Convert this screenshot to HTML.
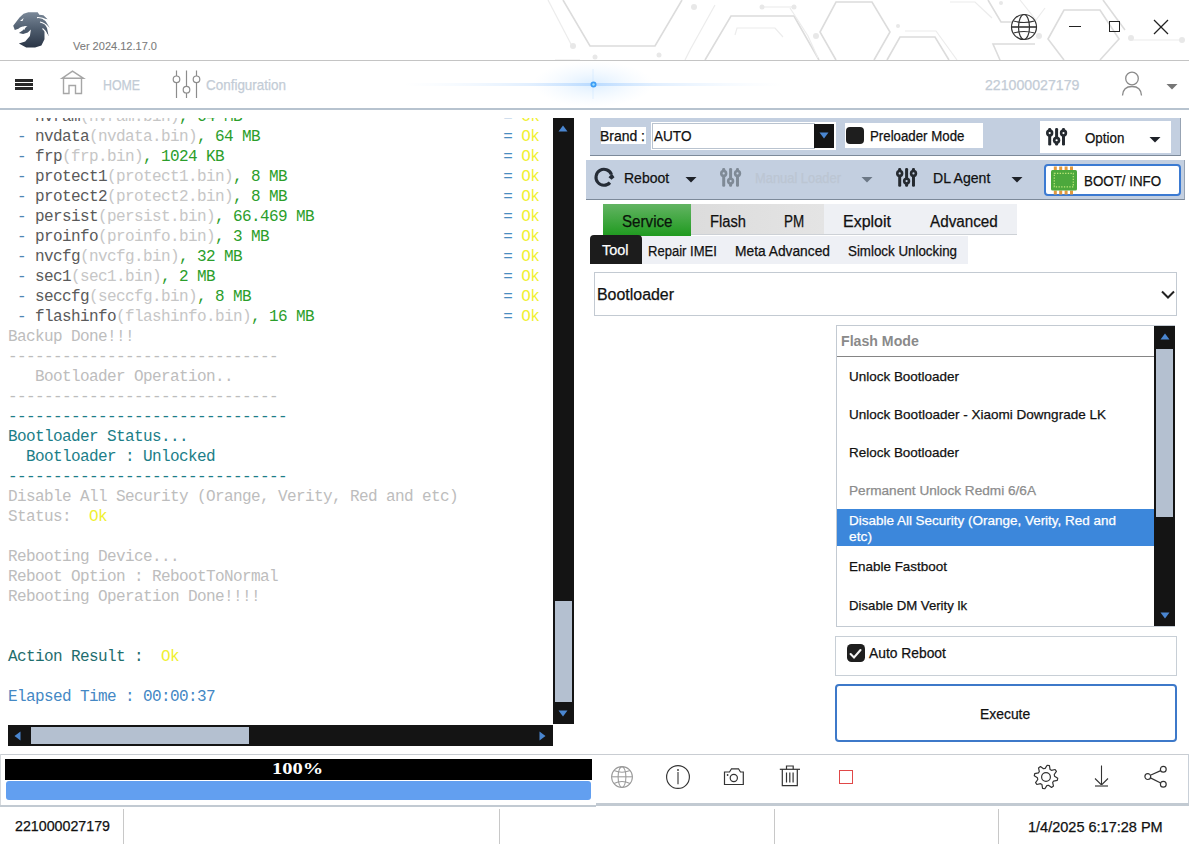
<!DOCTYPE html>
<html><head><meta charset="utf-8">
<style>
*{margin:0;padding:0;box-sizing:border-box;}
html,body{width:1189px;height:844px;overflow:hidden;background:#fff;}
body{position:relative;font-family:"Liberation Sans",sans-serif;color:#000;}
.a{position:absolute;}
.t{position:absolute;white-space:pre;line-height:1;}
svg{position:absolute;overflow:visible;}
#log{position:absolute;left:0;top:118px;width:553px;height:605px;overflow:hidden;background:#fff;}
#log .l{position:absolute;left:8px;font-family:"Liberation Mono",monospace;font-size:16px;line-height:16px;letter-spacing:-0.6px;white-space:pre;color:#bdbdbd;}
.d{color:#4f86b4}.n{color:#5a5a5a}.f{color:#c6c6c6}.g{color:#2b9e2b}.eq{color:#4a8cc0}.ok{color:#f0f032}
.tl{color:#1c7e88}.at{color:#1f6e6e}.el{color:#4488c4}
</style></head>
<body>

<svg width="1189" height="61" style="left:0;top:0">
<g fill="none" stroke="#dcdcdc" stroke-width="1.6">
<polyline points="563,0 590,46 655,46 682,0"/>
<polyline points="705,60 731,16 794,16 819,60"/>
<polyline points="836,60 820,32 836,2 872,2 890,32 874,60"/>
<polyline points="887,60 900,37 935,37 949,60"/>
<polyline points="988,0 1001,22 1013,22"/>
<polyline points="1000,60 993,44 1035,44"/>
<polyline points="1064,60 1048,39 1064,10 1100,10 1119,39 1100,60"/>
<polyline points="1103,0 1125,30"/>
</g>
<g fill="none" stroke="#ececec" stroke-width="1.2">
<polyline points="548,0 572,46"/>
<polyline points="555,60 580,60"/>
<polyline points="685,60 690,50 715,5"/>
<polyline points="735,35 737,28 775,28 783,37"/>
<polyline points="762,7 794,7"/>
<polyline points="790,8 808,36 818,58"/>
<polyline points="905,31 936,31 957,60"/>
<polyline points="950,2 975,2 992,18"/>
<polyline points="1020,0 1036,20 1045,8"/>
<polyline points="1130,40 1180,40"/>
</g>
<g fill="#e8e8e8">
<circle cx="573" cy="46" r="3"/><circle cx="694" cy="7" r="3"/><circle cx="762" cy="7" r="2.5"/>
<circle cx="794" cy="7" r="2.5"/><circle cx="595" cy="57" r="2.5"/><circle cx="659" cy="55" r="2.5"/><circle cx="816" cy="36" r="3"/><circle cx="1039" cy="36" r="3"/>
<circle cx="1131" cy="38" r="3"/><circle cx="1182" cy="40" r="3"/><circle cx="898" cy="26" r="2"/>
<circle cx="1001" cy="3" r="2"/>
</g>
</svg>

<div class="a" style="left:0px;top:60px;width:1189px;height:1px;background:#c4c4c4;"></div>
<div class="a" style="left:0px;top:108px;width:1189px;height:2px;background:#b7c3cf;"></div>
<svg width="48" height="44" style="left:8px;top:8px" viewBox="0 0 48 44">
<defs><linearGradient id="lg" x1="0" y1="0" x2="0" y2="1"><stop offset="0" stop-color="#7a8898"/><stop offset="0.5" stop-color="#4d5b6c"/><stop offset="1" stop-color="#2a3546"/></linearGradient></defs>
<path fill="url(#lg)" d="M20.3,4.2 L29.7,4.2 L31.3,6.8 L35.4,7.3 L39.6,11.2 L33.4,9.9 L37.5,13 L41.7,19.8 L36.5,15.6 L39,20 L40.6,28.1 L36.5,21.9 L36.5,31.3 L33.4,37.5 L27.1,39.6 L18.2,39.6 L10.9,35.4 L17.2,33.4 L21.9,28.1 L22.9,21.4 L19.8,24.5 L15.1,26 L10.9,25 L14.6,22.4 L17.2,19.8 L13.5,18 L18.8,16.7 L12,19.5 L10.4,20.8 L6.8,21.9 L5.2,17.7 L11.5,9.4 L15.6,5.7 Z"/>
<path fill="#fff" d="M12,13 L15.6,10 L14.5,13 Z"/>
<g fill="none" stroke="#fff" stroke-width="1.1"><path d="M29,9.6 Q34,9 38.5,12.5"/><path d="M32,14 Q37,15 40.5,19.5"/><path d="M34.5,20.5 Q38,23 39.5,27.5"/></g>
<path fill="#fff" d="M14,19.5 Q17,17.2 19.5,18.5 Q16.5,19.5 16.5,22 Z"/>
</svg>
<div id="t1" class="t" style="left:73.00px;top:40.87px;font-size:11.50px;color:#7c7c7c;font-family:'Liberation Sans',sans-serif;transform:scaleX(0.9588);transform-origin:0 0;-webkit-text-stroke:0.10px #7c7c7c;">Ver 2024.12.17.0</div>
<svg width="30" height="30" style="left:1010px;top:13px" viewBox="0 0 30 30">
<g fill="none" stroke="#333" stroke-width="1.2">
<circle cx="14" cy="14" r="12.5"/>
<ellipse cx="14" cy="14" rx="5.5" ry="12.5"/>
<line x1="1.5" y1="14" x2="26.5" y2="14" stroke-width="1.6"/>
<path d="M3.5,8 Q14,11 24.5,8"/>
<path d="M3.5,20 Q14,17 24.5,20"/>
</g></svg>
<div class="a" style="left:1069px;top:26px;width:12px;height:1px;background:#222;"></div>
<div class="a" style="left:1109px;top:21px;width:11px;height:11px;border:1.3px solid #222;"></div>
<svg width="16" height="16" style="left:1153px;top:19px" viewBox="0 0 16 16">
<g stroke="#222" stroke-width="1.3"><line x1="1" y1="1" x2="15" y2="15"/><line x1="15" y1="1" x2="1" y2="15"/></g></svg>
<div class="a" style="left:15px;top:79px;width:18px;height:3px;background:#282828;"></div>
<div class="a" style="left:15px;top:83px;width:18px;height:3px;background:#282828;"></div>
<div class="a" style="left:15px;top:87px;width:18px;height:3px;background:#282828;"></div>
<svg width="24" height="25" style="left:61px;top:70px" viewBox="0 0 24 25">
<g fill="none" stroke="#a6a6a6" stroke-width="1.4">
<path d="M1,8.3 L11.5,1.2 L22.5,8.3 Z"/>
<path d="M2.5,8.5 L2.5,23.5 L8,23.5 L8,15.5 L14.5,15.5 L14.5,23.5 L20.5,23.5 L20.5,8.5"/>
</g></svg>
<div id="t2" class="t" style="left:103.10px;top:78.15px;font-size:14.00px;color:#c3ccd6;font-family:'Liberation Sans',sans-serif;transform:scaleX(0.8833);transform-origin:0 0;-webkit-text-stroke:0.25px #c3ccd6;">HOME</div>
<svg width="30" height="30" style="left:171px;top:69px" viewBox="0 0 30 30">
<g fill="none" stroke="#8c8c8c" stroke-width="1.2">
<line x1="5.5" y1="1.5" x2="5.5" y2="7"/><circle cx="5.5" cy="10.3" r="3.3"/><line x1="5.5" y1="13.6" x2="5.5" y2="29"/>
<line x1="15.5" y1="1.5" x2="15.5" y2="17.4"/><circle cx="15.5" cy="20.7" r="3.3"/><line x1="15.5" y1="24" x2="15.5" y2="29"/>
<line x1="25.5" y1="1.5" x2="25.5" y2="7"/><circle cx="25.5" cy="10.3" r="3.3"/><line x1="25.5" y1="13.6" x2="25.5" y2="29"/>
</g></svg>
<div id="t3" class="t" style="left:206.00px;top:78.15px;font-size:14.00px;color:#c3ccd6;font-family:'Liberation Sans',sans-serif;transform:scaleX(0.9606);transform-origin:0 0;-webkit-text-stroke:0.25px #c3ccd6;">Configuration</div>
<div id="t4" class="t" style="left:985.00px;top:78.15px;font-size:14.00px;color:#c3ccd6;font-family:'Liberation Sans',sans-serif;transform:scaleX(1.0114);transform-origin:0 0;-webkit-text-stroke:0.25px #c3ccd6;">221000027179</div>
<svg width="22" height="26" style="left:1121px;top:71px" viewBox="0 0 22 26">
<g fill="none" stroke="#8a8a8a" stroke-width="1.3">
<circle cx="11" cy="7.5" r="6.3"/>
<path d="M1.5,24.5 Q2,15.5 11,15.5 Q20,15.5 20.5,24.5"/>
</g></svg>
<svg width="12" height="6" style="left:1166px;top:84px" viewBox="0 0 12 6"><path d="M0.5,0 L11.5,0 L6,5.5 Z" fill="#767676"/></svg>
<svg width="500" height="46" style="left:343px;top:61px" viewBox="0 0 500 46">
<defs>
<radialGradient id="gl" cx="0.5" cy="0.5" r="0.5"><stop offset="0" stop-color="#9ccfff" stop-opacity="0.35"/><stop offset="1" stop-color="#cfe6ff" stop-opacity="0"/></radialGradient>
<linearGradient id="st" x1="0" y1="0" x2="1" y2="0"><stop offset="0" stop-color="#d6eaff" stop-opacity="0"/><stop offset="0.5" stop-color="#9ccaff" stop-opacity="0.55"/><stop offset="1" stop-color="#d6eaff" stop-opacity="0"/></linearGradient>
</defs>
<ellipse cx="250" cy="23" rx="60" ry="23" fill="url(#gl)"/>
<rect x="60" y="22" width="380" height="3" fill="url(#st)"/>
<line x1="250" y1="8" x2="250" y2="38" stroke="#b8dcff" stroke-width="1" opacity="0.35"/>
<circle cx="250.5" cy="23.5" r="3" fill="#3d9cf5"/>
<circle cx="250.5" cy="23.5" r="1.2" fill="#9ee0ff"/>
</svg>
<div id="log">
<div class="l" style="top:-8.76px"><span class="d"> - </span><span class="n">nvram</span><span class="f">(nvram.bin)</span><span class="g">, 64 MB</span>                             <span class="eq">=</span> <span class="ok">Ok</span></div>
<div class="l" style="top:11.24px"><span class="d"> - </span><span class="n">nvdata</span><span class="f">(nvdata.bin)</span><span class="g">, 64 MB</span>                           <span class="eq">=</span> <span class="ok">Ok</span></div>
<div class="l" style="top:31.24px"><span class="d"> - </span><span class="n">frp</span><span class="f">(frp.bin)</span><span class="g">, 1024 KB</span>                               <span class="eq">=</span> <span class="ok">Ok</span></div>
<div class="l" style="top:51.24px"><span class="d"> - </span><span class="n">protect1</span><span class="f">(protect1.bin)</span><span class="g">, 8 MB</span>                        <span class="eq">=</span> <span class="ok">Ok</span></div>
<div class="l" style="top:71.24px"><span class="d"> - </span><span class="n">protect2</span><span class="f">(protect2.bin)</span><span class="g">, 8 MB</span>                        <span class="eq">=</span> <span class="ok">Ok</span></div>
<div class="l" style="top:91.24px"><span class="d"> - </span><span class="n">persist</span><span class="f">(persist.bin)</span><span class="g">, 66.469 MB</span>                     <span class="eq">=</span> <span class="ok">Ok</span></div>
<div class="l" style="top:111.24px"><span class="d"> - </span><span class="n">proinfo</span><span class="f">(proinfo.bin)</span><span class="g">, 3 MB</span>                          <span class="eq">=</span> <span class="ok">Ok</span></div>
<div class="l" style="top:131.24px"><span class="d"> - </span><span class="n">nvcfg</span><span class="f">(nvcfg.bin)</span><span class="g">, 32 MB</span>                             <span class="eq">=</span> <span class="ok">Ok</span></div>
<div class="l" style="top:151.24px"><span class="d"> - </span><span class="n">sec1</span><span class="f">(sec1.bin)</span><span class="g">, 2 MB</span>                                <span class="eq">=</span> <span class="ok">Ok</span></div>
<div class="l" style="top:171.24px"><span class="d"> - </span><span class="n">seccfg</span><span class="f">(seccfg.bin)</span><span class="g">, 8 MB</span>                            <span class="eq">=</span> <span class="ok">Ok</span></div>
<div class="l" style="top:191.24px"><span class="d"> - </span><span class="n">flashinfo</span><span class="f">(flashinfo.bin)</span><span class="g">, 16 MB</span>                     <span class="eq">=</span> <span class="ok">Ok</span></div>
<div class="l" style="top:211.24px"><span class="">Backup Done!!!</span></div>
<div class="l" style="top:231.24px"><span class="">------------------------------</span></div>
<div class="l" style="top:251.24px"><span class="">   Bootloader Operation..</span></div>
<div class="l" style="top:271.24px"><span class="">------------------------------</span></div>
<div class="l" style="top:291.24px"><span class="tl">-------------------------------</span></div>
<div class="l" style="top:311.24px"><span class="tl">Bootloader Status...</span></div>
<div class="l" style="top:331.24px"><span class="tl">  Bootloader : Unlocked</span></div>
<div class="l" style="top:351.24px"><span class="tl">-------------------------------</span></div>
<div class="l" style="top:371.24px"><span class="">Disable All Security (Orange, Verity, Red and etc)</span></div>
<div class="l" style="top:391.24px"><span class="">Status:  </span><span class="ok">Ok</span></div>
<div class="l" style="top:411.24px"></div>
<div class="l" style="top:431.24px"><span class="">Rebooting Device...</span></div>
<div class="l" style="top:451.24px"><span class="">Reboot Option : RebootToNormal</span></div>
<div class="l" style="top:471.24px"><span class="">Rebooting Operation Done!!!!</span></div>
<div class="l" style="top:491.24px"></div>
<div class="l" style="top:511.24px"></div>
<div class="l" style="top:531.24px"><span class="at">Action Result :  </span><span class="ok">Ok</span></div>
<div class="l" style="top:551.24px"></div>
<div class="l" style="top:571.24px"><span class="el">Elapsed Time : 00:00:37</span></div>
</div>
<div class="a" style="left:553px;top:118px;width:21px;height:606px;background:#141414;"></div>
<svg width="10" height="7" style="left:558px;top:125px" viewBox="0 0 10 7"><path d="M0.5,6.5 L9.5,6.5 L5,0.5 Z" fill="#4a86d0"/></svg>
<div class="a" style="left:555px;top:601px;width:17px;height:101px;background:#b4c0d0;"></div>
<svg width="10" height="7" style="left:558px;top:710px" viewBox="0 0 10 7"><path d="M0.5,0.5 L9.5,0.5 L5,6.5 Z" fill="#4a86d0"/></svg>
<div class="a" style="left:8px;top:725px;width:545px;height:21px;background:#141414;"></div>
<svg width="7" height="10" style="left:14px;top:731px" viewBox="0 0 7 10"><path d="M6.5,0.5 L6.5,9.5 L0.5,5 Z" fill="#4a86d0"/></svg>
<div class="a" style="left:31px;top:727px;width:218px;height:17px;background:#b4c0d0;"></div>
<svg width="7" height="10" style="left:539px;top:731px" viewBox="0 0 7 10"><path d="M0.5,0.5 L0.5,9.5 L6.5,5 Z" fill="#4a86d0"/></svg>
<div class="a" style="left:590px;top:118px;width:591px;height:38px;background:#c3cfe0;border-bottom:1px solid #7d8a9a;border-right:1px solid #97a3b3;"></div>
<div class="a" style="left:601px;top:127px;width:45px;height:17px;background:#fff;"></div>
<div id="t5" class="t" style="left:600.00px;top:129.15px;font-size:14.00px;color:#111;font-family:'Liberation Sans',sans-serif;transform:scaleX(0.9969);transform-origin:0 0;-webkit-text-stroke:0.25px #111;">Brand :</div>
<div class="a" style="left:651px;top:122px;width:185px;height:28px;background:#fff;"></div>
<div class="a" style="left:652px;top:123px;width:163px;height:26px;border:1px solid #b9c3cf;background:#fff;"></div>
<div id="t6" class="t" style="left:653.80px;top:128.93px;font-size:14.50px;color:#111;font-family:'Liberation Sans',sans-serif;transform:scaleX(0.9368);transform-origin:0 0;-webkit-text-stroke:0.25px #111;">AUTO</div>
<div class="a" style="left:814px;top:124px;width:20px;height:24px;background:#141414;"></div>
<svg width="10" height="7" style="left:819px;top:132px" viewBox="0 0 10 7"><path d="M0.5,0.5 L9.5,0.5 L5,6.5 Z" fill="#4a86d0"/></svg>
<div class="a" style="left:845px;top:123px;width:138px;height:25px;background:#fff;"></div>
<div class="a" style="left:846px;top:127px;width:18px;height:17px;background:#1e1e1e;border-radius:4px;"></div>
<div id="t7" class="t" style="left:869.60px;top:128.75px;font-size:14.00px;color:#111;font-family:'Liberation Sans',sans-serif;transform:scaleX(0.9476);transform-origin:0 0;-webkit-text-stroke:0.25px #111;">Preloader Mode</div>
<div class="a" style="left:1040px;top:121px;width:131px;height:32px;background:#fff;"></div>
<svg width="21.2" height="17.5" style="left:1045.5px;top:128.0px" viewBox="0 0 21.2 17.5"><g fill="#252a30"><rect x="2.20" y="0" width="3.00" height="17.50" rx="1.3"/><circle cx="3.70" cy="5.07" r="3.70"/><circle cx="3.70" cy="5.07" r="1.1" fill="#ffffff"/><rect x="9.10" y="0" width="3.00" height="17.50" rx="1.3"/><circle cx="10.60" cy="12.25" r="3.70"/><circle cx="10.60" cy="12.25" r="1.1" fill="#ffffff"/><rect x="16.00" y="0" width="3.00" height="17.50" rx="1.3"/><circle cx="17.50" cy="5.07" r="3.70"/><circle cx="17.50" cy="5.07" r="1.1" fill="#ffffff"/></g></svg>
<div id="t8" class="t" style="left:1084.60px;top:131.15px;font-size:14.00px;color:#111;font-family:'Liberation Sans',sans-serif;transform:scaleX(0.9527);transform-origin:0 0;-webkit-text-stroke:0.25px #111;">Option</div>
<svg width="12" height="6" style="left:1148.5px;top:136.5px" viewBox="0 0 12 6"><path d="M0.5,0 L11.5,0 L6,5.5 Z" fill="#1e2228"/></svg>
<div class="a" style="left:586px;top:160px;width:599px;height:40px;background:#c3cfe0;border-bottom:1px solid #7d8a9a;border-right:1px solid #97a3b3;"></div>
<svg width="22" height="20" style="left:593.5px;top:168px" viewBox="0 0 22 20">
<path d="M15.95,14.65 A8,8 0 1 1 17.42,6.3" fill="none" stroke="#252c36" stroke-width="3.1"/>
<path d="M14.5,9.2 L17.9,5.4 L20.5,9.2 L17.5,11.8 Z" fill="#252c36"/>
</svg>
<div id="t9" class="t" style="left:623.90px;top:170.85px;font-size:14.00px;color:#111;font-family:'Liberation Sans',sans-serif;transform:scaleX(0.9988);transform-origin:0 0;-webkit-text-stroke:0.25px #111;">Reboot</div>
<svg width="12" height="6" style="left:685px;top:176.5px" viewBox="0 0 12 6"><path d="M0.5,0 L11.5,0 L6,5.5 Z" fill="#1e2228"/></svg>
<svg width="21.2" height="18.7" style="left:720.0px;top:168.3px" viewBox="0 0 21.2 18.7"><g fill="#7f8a96"><rect x="2.20" y="0" width="3.00" height="18.70" rx="1.3"/><circle cx="3.70" cy="5.42" r="3.70"/><circle cx="3.70" cy="5.42" r="1.1" fill="#c3cfe0"/><rect x="9.10" y="0" width="3.00" height="18.70" rx="1.3"/><circle cx="10.60" cy="13.09" r="3.70"/><circle cx="10.60" cy="13.09" r="1.1" fill="#c3cfe0"/><rect x="16.00" y="0" width="3.00" height="18.70" rx="1.3"/><circle cx="17.50" cy="5.42" r="3.70"/><circle cx="17.50" cy="5.42" r="1.1" fill="#c3cfe0"/></g></svg>
<div id="t10" class="t" style="left:755.00px;top:170.85px;font-size:14.00px;color:#bcc6d3;font-family:'Liberation Sans',sans-serif;transform:scaleX(0.9207);transform-origin:0 0;-webkit-text-stroke:0.25px #bcc6d3;">Manual Loader</div>
<svg width="12" height="6" style="left:861px;top:176.5px" viewBox="0 0 12 6"><path d="M0.5,0 L11.5,0 L6,5.5 Z" fill="#6c7886"/></svg>
<svg width="21.2" height="18.7" style="left:896.3px;top:168.3px" viewBox="0 0 21.2 18.7"><g fill="#252a30"><rect x="2.20" y="0" width="3.00" height="18.70" rx="1.3"/><circle cx="3.70" cy="5.42" r="3.70"/><circle cx="3.70" cy="5.42" r="1.1" fill="#c3cfe0"/><rect x="9.10" y="0" width="3.00" height="18.70" rx="1.3"/><circle cx="10.60" cy="13.09" r="3.70"/><circle cx="10.60" cy="13.09" r="1.1" fill="#c3cfe0"/><rect x="16.00" y="0" width="3.00" height="18.70" rx="1.3"/><circle cx="17.50" cy="5.42" r="3.70"/><circle cx="17.50" cy="5.42" r="1.1" fill="#c3cfe0"/></g></svg>
<div id="t11" class="t" style="left:932.70px;top:170.75px;font-size:14.00px;color:#111;font-family:'Liberation Sans',sans-serif;transform:scaleX(1.0036);transform-origin:0 0;-webkit-text-stroke:0.25px #111;">DL Agent</div>
<svg width="12" height="6" style="left:1011px;top:176.5px" viewBox="0 0 12 6"><path d="M0.5,0 L11.5,0 L6,5.5 Z" fill="#1e2228"/></svg>
<div class="a" style="left:1044px;top:164px;width:137px;height:32px;background:#fff;border:2px solid #3b7ad2;border-radius:4px;"></div>
<svg width="28" height="29" style="left:1050px;top:165.5px" viewBox="0 0 28 29">
<g fill="#e39a3c"><rect x="3.8" y="0.5" width="3" height="4"/><rect x="9.2" y="0.5" width="3" height="4"/><rect x="14.6" y="0.5" width="3" height="4"/><rect x="20" y="0.5" width="3" height="4"/>
<rect x="3.8" y="24.5" width="3" height="4"/><rect x="9.2" y="24.5" width="3" height="4"/><rect x="14.6" y="24.5" width="3" height="4"/><rect x="20" y="24.5" width="3" height="4"/></g>
<rect x="1" y="4" width="26" height="20.5" rx="1.5" fill="#4ca83c"/>
<rect x="4.3" y="7.4" width="19" height="13.4" fill="none" stroke="#bfe878" stroke-width="1.2" stroke-dasharray="1.3,1.4"/>
</svg>
<div id="t12" class="t" style="left:1083.60px;top:174.15px;font-size:14.00px;color:#111;font-family:'Liberation Sans',sans-serif;transform:scaleX(0.9531);transform-origin:0 0;-webkit-text-stroke:0.25px #111;">BOOT/ INFO</div>
<div class="a" style="left:603px;top:204px;width:88px;height:32px;background:linear-gradient(#63b463,#1f9a1f);"></div>
<div id="t13" class="t" style="left:621.50px;top:214.16px;font-size:16.00px;color:#0a140a;font-family:'Liberation Sans',sans-serif;transform:scaleX(0.9464);transform-origin:0 0;-webkit-text-stroke:0.25px #0a140a;">Service</div>
<div class="a" style="left:691px;top:204px;width:133px;height:30px;background:linear-gradient(90deg,#dcdcdc,#e4e4e4);"></div>
<div class="a" style="left:824px;top:204px;width:193px;height:30px;background:#eef0f4;"></div>
<div class="a" style="left:691px;top:234px;width:326px;height:1px;background:#cdd1d6;"></div>
<div id="t14" class="t" style="left:709.90px;top:214.06px;font-size:16.00px;color:#111;font-family:'Liberation Sans',sans-serif;transform:scaleX(0.9201);transform-origin:0 0;-webkit-text-stroke:0.25px #111;">Flash</div>
<div id="t15" class="t" style="left:784.10px;top:214.06px;font-size:16.00px;color:#111;font-family:'Liberation Sans',sans-serif;transform:scaleX(0.8375);transform-origin:0 0;-webkit-text-stroke:0.25px #111;">PM</div>
<div id="t16" class="t" style="left:842.90px;top:214.06px;font-size:16.00px;color:#111;font-family:'Liberation Sans',sans-serif;transform:scaleX(0.9993);transform-origin:0 0;-webkit-text-stroke:0.25px #111;">Exploit</div>
<div id="t17" class="t" style="left:930.10px;top:214.06px;font-size:16.00px;color:#111;font-family:'Liberation Sans',sans-serif;transform:scaleX(0.9526);transform-origin:0 0;-webkit-text-stroke:0.25px #111;">Advanced</div>
<div class="a" style="left:642px;top:236px;width:326px;height:28px;background:#eef0f5;"></div>
<div class="a" style="left:590px;top:235px;width:52px;height:29px;background:#1c1c1c;border-radius:4px 4px 0 0;"></div>
<div id="t18" class="t" style="left:602.00px;top:243.35px;font-size:14.00px;color:#fff;font-family:'Liberation Sans',sans-serif;transform:scaleX(1.0316);transform-origin:0 0;-webkit-text-stroke:0.25px #fff;">Tool</div>
<div id="t19" class="t" style="left:648.10px;top:244.15px;font-size:14.00px;color:#111;font-family:'Liberation Sans',sans-serif;transform:scaleX(0.9321);transform-origin:0 0;-webkit-text-stroke:0.25px #111;">Repair IMEI</div>
<div id="t20" class="t" style="left:735.00px;top:244.15px;font-size:14.00px;color:#111;font-family:'Liberation Sans',sans-serif;transform:scaleX(0.9843);transform-origin:0 0;-webkit-text-stroke:0.25px #111;">Meta Advanced</div>
<div id="t21" class="t" style="left:847.80px;top:244.15px;font-size:14.00px;color:#111;font-family:'Liberation Sans',sans-serif;transform:scaleX(0.9530);transform-origin:0 0;-webkit-text-stroke:0.25px #111;">Simlock Unlocking</div>
<div class="a" style="left:594px;top:272px;width:583px;height:44px;border:1px solid #c3cad2;background:#fff;"></div>
<div id="t22" class="t" style="left:597.00px;top:287.46px;font-size:16.00px;color:#111;font-family:'Liberation Sans',sans-serif;transform:scaleX(0.9950);transform-origin:0 0;-webkit-text-stroke:0.25px #111;">Bootloader</div>
<svg width="14" height="9" style="left:1161px;top:290px" viewBox="0 0 14 9"><path d="M1,1.5 L7,7.5 L13,1.5" fill="none" stroke="#222" stroke-width="2"/></svg>
<div class="a" style="left:836px;top:325px;width:339px;height:302px;border:1px solid #c3cad2;border-right:none;background:#fff;"></div>
<div id="t23" class="t" style="left:841.10px;top:334.15px;font-size:14.00px;color:#8a8a8a;font-family:'Liberation Sans',sans-serif;font-weight:bold;transform:scaleX(1.0102);transform-origin:0 0;">Flash Mode</div>
<div class="a" style="left:837px;top:356px;width:317px;height:1px;background:#858585;"></div>
<div id="t24" class="t" style="left:849.20px;top:370.27px;font-size:13.50px;color:#111;font-family:'Liberation Sans',sans-serif;transform:scaleX(0.9970);transform-origin:0 0;-webkit-text-stroke:0.25px #111;">Unlock Bootloader</div>
<div id="t25" class="t" style="left:849.20px;top:408.07px;font-size:13.50px;color:#111;font-family:'Liberation Sans',sans-serif;transform:scaleX(1.0014);transform-origin:0 0;-webkit-text-stroke:0.25px #111;">Unlock Bootloader - Xiaomi Downgrade LK</div>
<div id="t26" class="t" style="left:849.20px;top:446.27px;font-size:13.50px;color:#111;font-family:'Liberation Sans',sans-serif;transform:scaleX(0.9970);transform-origin:0 0;-webkit-text-stroke:0.25px #111;">Relock Bootloader</div>
<div id="t27" class="t" style="left:849.20px;top:484.07px;font-size:13.50px;color:#8c8c8c;font-family:'Liberation Sans',sans-serif;transform:scaleX(1.0089);transform-origin:0 0;-webkit-text-stroke:0.25px #8c8c8c;">Permanent Unlock Redmi 6/6A</div>
<div class="a" style="left:837px;top:509px;width:317px;height:37px;background:#3c87db;"></div>
<div id="t28" class="t" style="left:849.20px;top:514.27px;font-size:13.50px;color:#fff;font-family:'Liberation Sans',sans-serif;transform:scaleX(0.9976);transform-origin:0 0;-webkit-text-stroke:0.25px #fff;">Disable All Security (Orange, Verity, Red and</div>
<div id="t29" class="t" style="left:849.20px;top:530.27px;font-size:13.50px;color:#fff;font-family:'Liberation Sans',sans-serif;transform:scaleX(1.0215);transform-origin:0 0;-webkit-text-stroke:0.25px #fff;">etc)</div>
<div id="t30" class="t" style="left:849.20px;top:560.47px;font-size:13.50px;color:#111;font-family:'Liberation Sans',sans-serif;transform:scaleX(0.9967);transform-origin:0 0;-webkit-text-stroke:0.25px #111;">Enable Fastboot</div>
<div id="t31" class="t" style="left:849.20px;top:598.77px;font-size:13.50px;color:#111;font-family:'Liberation Sans',sans-serif;transform:scaleX(0.9768);transform-origin:0 0;-webkit-text-stroke:0.25px #111;">Disable DM Verity lk</div>
<div class="a" style="left:1154px;top:326px;width:21px;height:300px;background:#141414;"></div>
<svg width="10" height="7" style="left:1159.5px;top:332.5px" viewBox="0 0 10 7"><path d="M0.5,6.5 L9.5,6.5 L5,0.5 Z" fill="#4a86d0"/></svg>
<div class="a" style="left:1156px;top:349px;width:17px;height:168px;background:#b4c0d0;"></div>
<svg width="10" height="7" style="left:1159.5px;top:611.5px" viewBox="0 0 10 7"><path d="M0.5,0.5 L9.5,0.5 L5,6.5 Z" fill="#4a86d0"/></svg>
<div class="a" style="left:835px;top:636px;width:342px;height:40px;border:1px solid #c8cfd6;background:#fff;"></div>
<div class="a" style="left:847px;top:644px;width:17.5px;height:18px;background:#1e1e1e;border-radius:4.5px;"></div>
<svg width="17" height="17" style="left:847px;top:644.5px" viewBox="0 0 17 17"><path d="M3.6,9 L7,12.4 L13.5,5" fill="none" stroke="#f4f4f4" stroke-width="2.1" stroke-linecap="round"/></svg>
<div id="t32" class="t" style="left:868.80px;top:646.45px;font-size:14.00px;color:#111;font-family:'Liberation Sans',sans-serif;transform:scaleX(0.9879);transform-origin:0 0;-webkit-text-stroke:0.25px #111;">Auto Reboot</div>
<div class="a" style="left:835px;top:684px;width:342px;height:58px;border:2px solid #3d79c9;border-radius:4px;background:#fff;"></div>
<div id="t33" class="t" style="left:980.10px;top:706.95px;font-size:14.00px;color:#111;font-family:'Liberation Sans',sans-serif;transform:scaleX(0.9922);transform-origin:0 0;-webkit-text-stroke:0.25px #111;">Execute</div>
<div class="a" style="left:0px;top:754px;width:1189px;height:1px;background:#c9cdd2;"></div>
<div class="a" style="left:0px;top:754px;width:1px;height:52px;background:#d4d8dc;"></div>
<div class="a" style="left:1188px;top:754px;width:1px;height:50px;background:#c9d0d8;"></div>
<div class="a" style="left:5px;top:759px;width:587px;height:21px;background:#000;"></div>
<div id="t34" class="t" style="left:271.80px;top:760.26px;font-size:17.60px;color:#fff;font-family:'Liberation Serif',serif;font-weight:bold;transform:scaleX(1.1663);transform-origin:0 0;">100%</div>
<div class="a" style="left:6px;top:781px;width:585px;height:19px;background:#629ff0;border-radius:3px;"></div>
<div class="a" style="left:0px;top:805px;width:596px;height:1.5px;background:#c2cad2;"></div>
<div class="a" style="left:596px;top:803px;width:593px;height:3px;background:#c2cad2;"></div>
<svg width="26" height="26" style="left:608.8px;top:764px" viewBox="0 0 26 26">
<g fill="none" stroke="#9a9a9a" stroke-width="1.05">
<circle cx="13" cy="13" r="10.4"/><ellipse cx="13" cy="13" rx="3.9" ry="10.4"/>
<line x1="2.6" y1="12.8" x2="23.4" y2="12.8"/><path d="M5,6.5 Q13,10 21,6.5"/><path d="M5,19.5 Q13,15.5 21,19.5"/>
</g></svg>
<svg width="28" height="28" style="left:663.5px;top:762.6px" viewBox="0 0 28 28">
<g fill="none" stroke="#333" stroke-width="1.15"><circle cx="14" cy="14" r="11.4"/><line x1="14" y1="9" x2="14" y2="21.2" stroke-width="1.1"/></g>
<circle cx="14" cy="7" r="0.9" fill="#333"/></svg>
<svg width="22" height="19" style="left:723px;top:767px" viewBox="0 0 22 19">
<g fill="none" stroke="#333" stroke-width="1.2">
<path d="M1.5,5 L6.5,5 L8.5,1.8 L15.5,1.8 L17.5,5 L20.3,5 L20.3,17.5 L1.5,17.5 Z"/>
<circle cx="10.8" cy="11" r="3.6"/></g>
<circle cx="4.6" cy="8" r="0.9" fill="#333"/></svg>
<svg width="22" height="22" style="left:779px;top:765px" viewBox="0 0 22 22">
<g fill="none" stroke="#333" stroke-width="1.2">
<line x1="0.8" y1="4.3" x2="21" y2="4.3"/><path d="M7.5,4.3 L7.5,1 L14.2,1 L14.2,4.3"/>
<path d="M3.3,4.3 L3.3,20.7 L18.3,20.7 L18.3,4.3"/>
<line x1="7.5" y1="7.5" x2="7.5" y2="17.5"/><line x1="10.8" y1="7.5" x2="10.8" y2="17.5"/><line x1="14.1" y1="7.5" x2="14.1" y2="17.5"/>
</g></svg>
<div class="a" style="left:839px;top:770px;width:13.5px;height:13.5px;border:1.4px solid #e04848;"></div>
<svg width="26" height="26" style="left:1032.5px;top:763.5px" viewBox="0 0 26 26">
<g fill="none" stroke="#333" stroke-width="1.2" stroke-linejoin="round"><polygon points="14.16,1.26 16.43,1.71 17.05,5.42 18.46,6.35 22.12,5.51 23.41,7.44 21.23,10.50 21.56,12.16 24.74,14.16 24.29,16.43 20.58,17.05 19.65,18.46 20.49,22.12 18.56,23.41 15.50,21.23 13.84,21.56 11.84,24.74 9.57,24.29 8.95,20.58 7.54,19.65 3.88,20.49 2.59,18.56 4.77,15.50 4.44,13.84 1.26,11.84 1.71,9.57 5.42,8.95 6.35,7.54 5.51,3.88 7.44,2.59 10.50,4.77 12.16,4.44"/><circle cx="13" cy="13" r="4.4"/></g></svg>
<svg width="16" height="22" style="left:1094px;top:765px" viewBox="0 0 16 22">
<g fill="none" stroke="#333" stroke-width="1.1"><line x1="7.5" y1="0.5" x2="7.5" y2="20"/><path d="M1,13.5 L7.5,20 L14,13.5"/></g>
<rect x="1" y="20" width="13" height="2" fill="#8a8a8a"/></svg>
<svg width="22" height="22" style="left:1144px;top:765px" viewBox="0 0 22 22">
<g fill="none" stroke="#333" stroke-width="1.2">
<circle cx="19.3" cy="4.3" r="2.9"/><circle cx="3.8" cy="11.6" r="2.9"/><circle cx="19.3" cy="19.3" r="2.9"/>
<line x1="6.4" y1="10.3" x2="16.7" y2="5.6"/><line x1="6.4" y1="12.9" x2="16.7" y2="18"/>
</g></svg>
<div id="t35" class="t" style="left:14.50px;top:819.03px;font-size:14.50px;color:#111;font-family:'Liberation Sans',sans-serif;transform:scaleX(0.9816);transform-origin:0 0;-webkit-text-stroke:0.25px #111;">221000027179</div>
<div class="a" style="left:123px;top:809px;width:1px;height:35px;background:#c8c8c8;"></div>
<div class="a" style="left:499px;top:809px;width:1px;height:35px;background:#c8c8c8;"></div>
<div class="a" style="left:774px;top:809px;width:1px;height:35px;background:#c8c8c8;"></div>
<div class="a" style="left:998px;top:809px;width:1px;height:35px;background:#c8c8c8;"></div>
<div id="t36" class="t" style="left:1028.20px;top:819.73px;font-size:14.50px;color:#111;font-family:'Liberation Sans',sans-serif;transform:scaleX(1.0004);transform-origin:0 0;-webkit-text-stroke:0.25px #111;">1/4/2025 6:17:28 PM</div>
</body></html>
